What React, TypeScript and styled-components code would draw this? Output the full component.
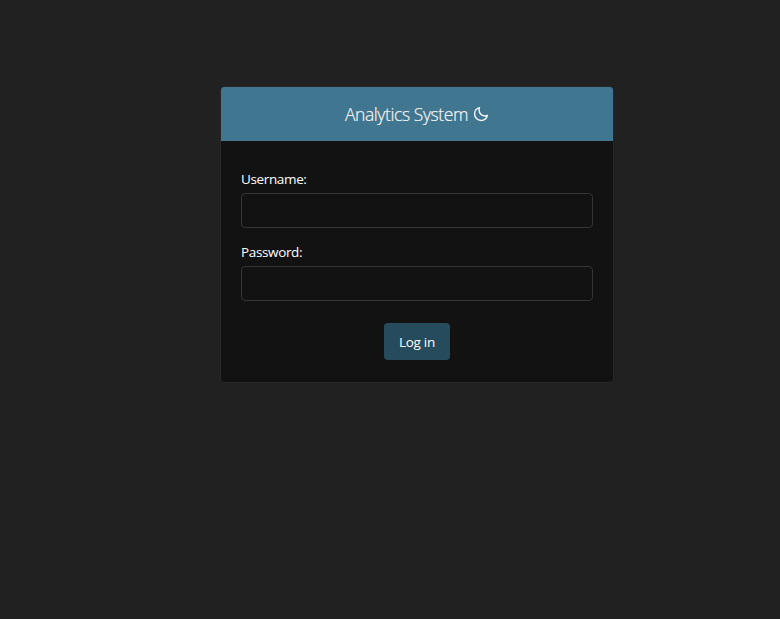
import React from "react";
import styled, { createGlobalStyle } from "styled-components";

const Global = createGlobalStyle`
  *, *::before, *::after { box-sizing: border-box; }
  body { margin: 0; background: #212121; color: #fff; font: 13.5px/20px "Open Sans", "Noto Sans", sans-serif; }
`;

const Page = styled.main`
  min-height: 100vh;
  display: flex;
  justify-content: center;
  align-items: flex-start;
  padding: 86px 0 0 54px;
`;

const Card = styled.section`
  width: 394px;
  height: 297px;
  background: #121212;
  border: 1px solid #282828;
  border-radius: 4px;
  overflow: hidden;
`;

const Header = styled.header`
  height: 54px;
  display: flex;
  align-items: center;
  justify-content: center;
  gap: 5px;
  background: #417690;
`;

const Title = styled.h1`
  margin: 0;
  font: 300 17.5px/24px "Open Sans", sans-serif;
  letter-spacing: -0.4px;
  color: #f5f5f5;
  -webkit-text-stroke: 0.2px #f5f5f5;
`;

const MoonIcon = styled.svg`
  width: 16px;
  height: 16px;
  fill: none;
  stroke: #f5f5f5;
  stroke-width: 46px;
  stroke-linejoin: round;
`;

const Form = styled.form`
  display: flex;
  flex-direction: column;
  padding: 28px 20px 0;
`;

const Field = styled.label`
  display: flex;
  flex-direction: column;
  gap: 4px;
  height: 73px;
`;

const Label = styled.span`
  letter-spacing: -0.36px;
`;

const Input = styled.input`
  height: 35px;
  padding: 8px;
  color: #eee;
  background: #121212;
  border: 1px solid #353535;
  border-radius: 4px;
  font: inherit;
`;

const Submit = styled.button`
  align-self: center;
  width: 66px;
  height: 37px;
  margin-top: 8px;
  padding: 1px 0 0;
  color: #fff;
  background: #264b5d;
  border: 0;
  border-radius: 4px;
  font: inherit;
  letter-spacing: -0.3px;
`;

export default function App() {
  return (
    <>
      <Global />
      <Page>
        <Card>
          <Header>
            <Title>Analytics System</Title>
            <MoonIcon viewBox="0 0 512 512" aria-hidden="true">
              <path d="M195 125c0-26.3 5.3-51.3 14.9-74.1C118.7 73 51 155.1 51 253c0 114.8 93.2 208 208 208 97.9 0 180-67.7 202.1-158.9-22.8 9.6-47.9 14.9-74.1 14.9-106 0-192-86-192-192z" />
            </MoonIcon>
          </Header>
          <Form>
            <Field><Label>Username:</Label><Input name="username" /></Field>
            <Field><Label>Password:</Label><Input name="password" type="password" /></Field>
            <Submit type="button">Log in</Submit>
          </Form>
        </Card>
      </Page>
    </>
  );
}
